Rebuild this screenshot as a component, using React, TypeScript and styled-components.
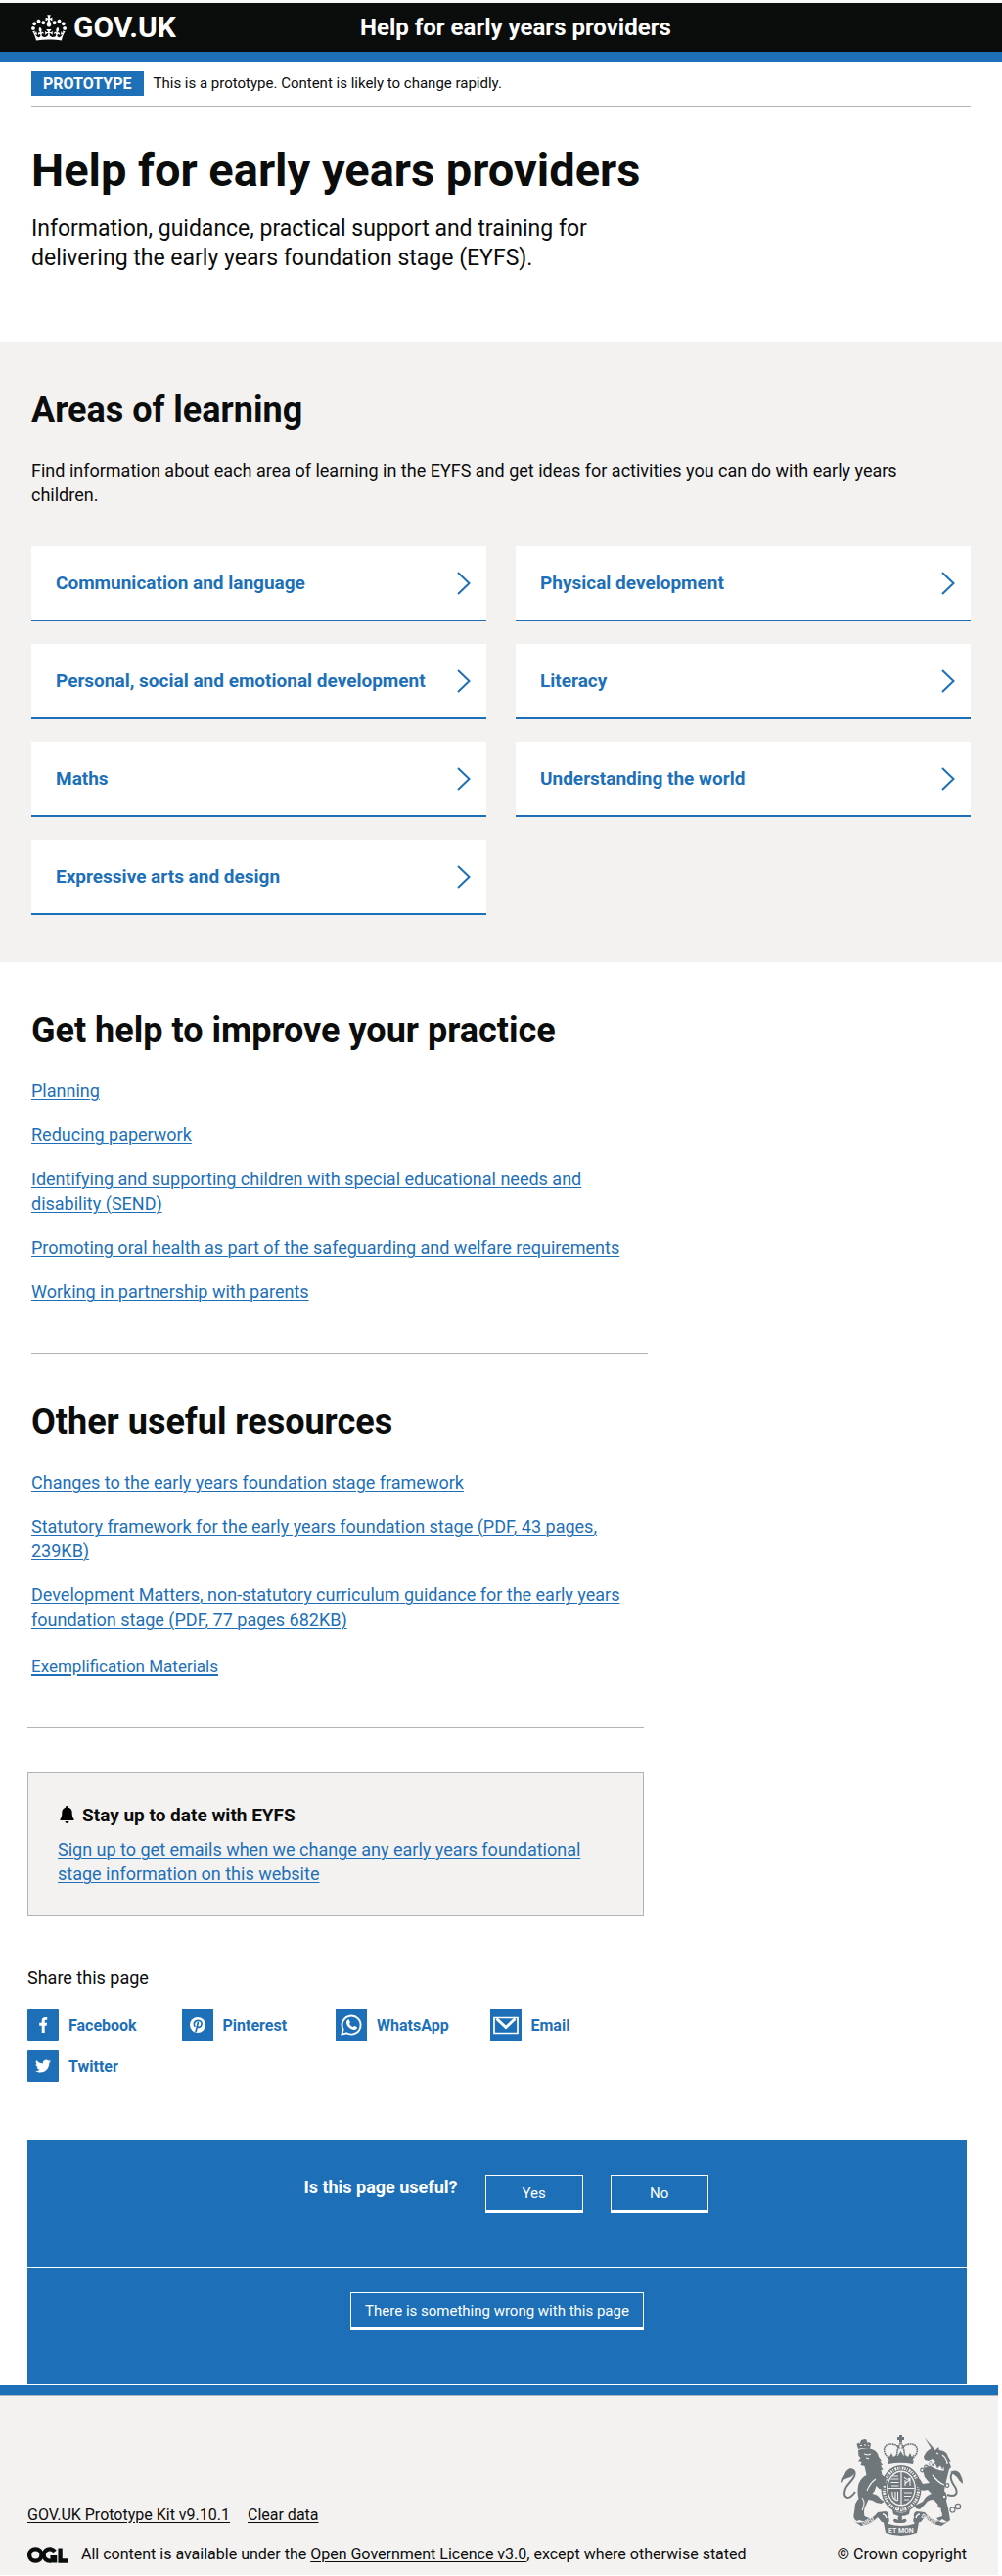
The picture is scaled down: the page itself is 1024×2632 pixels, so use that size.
import React from "react";
import styled, { createGlobalStyle, css } from "styled-components";

const color = {
  text: "#0b0c0c",
  blue: "#1d70b8",
  grey: "#f3f2f1",
  border: "#b1b4b6",
  crest: "#6f777b",
  white: "#ffffff",
};

const GlobalStyle = createGlobalStyle`
  *, *::before, *::after { box-sizing: border-box; }
  body {
    margin: 0;
    background: ${color.white};
    color: ${color.text};
    font-family: Roboto, "Liberation Sans", sans-serif;
    font-size: 18px;
    line-height: 25px;
  }
  h1, h2, h3, p, ul { margin: 0; padding: 0; }
  ul { list-style: none; }
  svg { display: block; flex: none; }
`;

/* ---------- header ---------- */

const Header = styled.header`
  padding: 0 32px;
  background: ${color.text};
  border-top: 3px solid #f8f8f8;
  border-bottom: 10px solid ${color.blue};
`;

const HeaderInner = styled.div`
  display: flex;
  align-items: center;
  height: 50px;
`;

const headerLink = css`
  color: ${color.white};
  font-weight: 700;
  text-decoration: none;
`;

const LogoLink = styled.a`
  ${headerLink}
  display: flex;
  align-items: center;
  gap: 7px;
  flex: 0 0 35%;
  font-size: 30px;
  line-height: 30px;
`;

const ServiceLink = styled.a`
  ${headerLink}
  font-size: 24px;
  line-height: 30px;
`;

/* ---------- main column ---------- */

const Wrap = styled.div`
  padding: 0 32px;
`;

const PhaseBanner = styled.div`
  display: flex;
  align-items: center;
  gap: 10px;
  padding: 10px 0;
  border-bottom: 1px solid ${color.border};
  font-size: 15px;
`;

const Tag = styled.strong`
  padding: 0 12px;
  background: ${color.blue};
  color: ${color.white};
  font-size: 16px;
  text-transform: uppercase;
`;

const TwoThirds = styled.div`
  width: 100%;
  max-width: 630px;
`;

const Intro = styled(TwoThirds)`
  padding: 40px 0 70px;
`;

const PageTitle = styled.h1`
  margin-bottom: 20px;
  font-size: 47px;
  line-height: 50px;
`;

const Lead = styled.p`
  font-size: 23px;
  line-height: 30px;
`;

const Heading = styled.h2`
  margin-bottom: 29px;
  font-size: 36px;
  line-height: 40px;
`;

const AreasSection = styled.section`
  padding: 50px 32px 48px;
  background: ${color.grey};
`;

const AreasIntro = styled.p`
  padding-right: 30px;
`;

const CardGrid = styled.ul`
  display: grid;
  grid-template-columns: 1fr 1fr;
  gap: 23px 30px;
  margin-top: 40px;
`;

const Card = styled.a`
  display: flex;
  align-items: center;
  justify-content: space-between;
  height: 77px;
  padding: 0 16px 0 25px;
  background: ${color.white};
  border-bottom: 2px solid ${color.blue};
  color: ${color.blue};
  font-size: 19px;
  font-weight: 700;
  text-decoration: none;
`;

const LinkSection = styled.section`
  padding: 50px 0;
`;

const LinkList = styled.ul`
  display: flex;
  flex-direction: column;
  gap: 20px;
`;

const LinkItem = styled.li<{ $minor?: boolean }>`
  padding-top: ${(p) => (p.$minor ? "3px" : "0")};
  font-size: ${(p) => (p.$minor ? "17px" : "18px")};
`;

const TextLink = styled.a<{ $heavy?: boolean }>`
  color: ${color.blue};
  text-decoration: underline;
  text-decoration-thickness: ${(p) => (p.$heavy ? "2px" : "1px")};
  text-underline-offset: 2px;
`;

const Rule = styled.hr`
  height: 1px;
  margin: 0;
  border: 0;
  background: ${color.border};
`;

/* ---------- lower part of the page ---------- */

const Lower = styled.div`
  margin-right: 4px;
`;

const LowerWrap = styled.div`
  padding: 0 32px 0 28px;
`;

const SignUp = styled.section`
  margin: 45px 0 50px;
  padding: 30px;
  background: ${color.grey};
  border: 1px solid ${color.border};
`;

const SignUpTitle = styled.h3`
  display: flex;
  align-items: center;
  gap: 6px;
  margin-bottom: 10px;
  font-size: 19px;
  line-height: 25px;
`;

const ShareGrid = styled.ul`
  display: grid;
  grid-template-columns: repeat(4, 1fr);
  row-gap: 10px;
  margin: 20px 0 60px;
`;

const ShareLink = styled.a`
  display: flex;
  align-items: center;
  gap: 10px;
  height: 32px;
  color: ${color.blue};
  font-size: 16px;
  font-weight: 700;
  text-decoration: none;
`;

const Feedback = styled.section`
  background: ${color.blue};
  border-bottom: 1px solid ${color.white};
`;

const FeedbackRow = styled.div<{ $question?: boolean }>`
  display: flex;
  align-items: flex-start;
  justify-content: center;
  gap: 28px;
  padding: ${(p) => (p.$question ? "35px 0 55px 18px" : "25px 0 55px")};
  border-top: ${(p) => (p.$question ? "0" : `1px solid ${color.white}`)};
`;

const Question = styled.h3`
  color: ${color.white};
  font-size: 18px;
  line-height: 25px;
`;

const OutlineButton = styled.button`
  min-width: 100px;
  height: 39px;
  padding: 0 14px;
  background: transparent;
  border: 1px solid ${color.white};
  border-bottom-width: 3px;
  border-radius: 0;
  color: ${color.white};
  font-family: inherit;
  font-size: 15px;
  line-height: 20px;
`;

/* ---------- footer ---------- */

const Footer = styled.footer`
  padding: 41px 32px 11px 28px;
  background: ${color.grey};
  border-top: 10px solid ${color.blue};
  box-shadow: inset 0 1px 0 ${color.border};
  font-size: 16px;
  line-height: 20px;
`;

const FooterInner = styled.div`
  display: flex;
  align-items: flex-end;
  justify-content: space-between;
`;

const FooterLinks = styled.ul`
  display: flex;
  gap: 18px;
  margin-bottom: 20px;
`;

const FooterLink = styled.a`
  color: ${color.text};
  text-underline-offset: 2px;
`;

const Licence = styled.p`
  display: flex;
  align-items: center;
  gap: 14px;
`;

const Copyright = styled.a`
  display: flex;
  flex-direction: column;
  align-items: center;
  gap: 9px;
  color: ${color.text};
  text-decoration: none;
`;

/* ---------- drawings ---------- */

const Crown = () => (
  <svg width="36" height="27" viewBox="0 0 132 97" fill="currentColor" aria-hidden="true">
    <path
      fillRule="evenodd"
      d="M25 30.2c3.5 1.5 7.7-.2 9.1-3.7 1.5-3.6-.2-7.8-3.9-9.2-3.6-1.4-7.6.3-9.1 3.9-1.4 3.5.3 7.5 3.9 9zM9 39.5c3.6 1.5 7.8-.2 9.2-3.7 1.5-3.6-.2-7.8-3.9-9.1-3.6-1.5-7.6.2-9.1 3.8-1.4 3.5.3 7.5 3.8 9zM4.4 57.2c3.5 1.5 7.7-.2 9.1-3.8 1.5-3.6-.2-7.7-3.9-9.1-3.5-1.5-7.6.3-9.1 3.8-1.4 3.5.3 7.6 3.9 9.1zm38.3-21.4c3.5 1.5 7.7-.2 9.1-3.8 1.5-3.6-.2-7.7-3.9-9.1-3.6-1.5-7.6.3-9.1 3.8-1.3 3.6.4 7.7 3.9 9.1zm64.4-5.6c-3.6 1.5-7.8-.2-9.1-3.7-1.5-3.6.2-7.8 3.8-9.2 3.6-1.4 7.7.3 9.2 3.9 1.3 3.5-.4 7.5-3.9 9zm15.9 9.3c-3.6 1.5-7.7-.2-9.1-3.7-1.5-3.6.2-7.8 3.7-9.1 3.6-1.5 7.7.2 9.2 3.8 1.5 3.5-.3 7.5-3.8 9zm4.7 17.7c-3.6 1.5-7.8-.2-9.2-3.8-1.5-3.6.2-7.7 3.9-9.1 3.6-1.5 7.7.3 9.2 3.8 1.3 3.5-.4 7.6-3.9 9.1zM89.3 35.8c-3.6 1.5-7.8-.2-9.2-3.8-1.4-3.6.2-7.7 3.9-9.1 3.6-1.5 7.7.3 9.2 3.8 1.4 3.6-.3 7.7-3.9 9.1zM69.7 17.7l8.9 4.7V9.3l-8.9 2.8c-.2-.3-.5-.6-.9-.9L72.4 0H59.6l3.5 11.2c-.3.3-.6.5-.9.9l-8.8-2.8v13.1l8.8-4.7c.3.3.6.7.9.9l-5 15.4v.1c-.2.8-.4 1.6-.4 2.4 0 4.1 3.1 7.5 7 8.1h.2c.3 0 .7.1 1 .1.4 0 .7 0 1-.1h.2c4-.6 7.1-4.1 7.1-8.1 0-.8-.1-1.7-.4-2.4V34l-5.1-15.4c.4-.2.7-.6 1-.9zM66 92.8c16.9 0 32.8 1.1 47.1 3.2 4-16.9 8.9-26.7 14-33.5l-9.6-3.4c1 4.9 1.1 7.2 0 10.2-1.5-1.4-3-4.3-4.2-8.7L108.6 76c2.8-2 5-3.2 7.5-3.3-4.4 9.4-10 11.9-13.6 11.2-4.3-.8-6.3-4.6-5.6-7.9 1-4.7 5.7-5.9 8-.5 4.3-8.7-3-11.4-7.6-8.8 7.1-7.2 7.9-13.5 2.1-21.1-8 6.1-8.1 12.3-4.5 20.8-4.7-5.4-12.1-2.5-9.5 6.2 3.4-5.2 7.9-2 7.2 3.1-.6 4.3-6.4 7.8-13.5 7.2-10.3-.9-10.9-8-11.2-13.8 2.5-.5 7.1 1.8 11 7.3L80.2 60c-4.1 4.4-8 5.3-12.3 5.4 1.4-4.4 8-11.6 8-11.6H55.5s6.4 7.2 7.9 11.6c-4.2-.1-8-1-12.3-5.4l1.4 16.4c3.9-5.5 8.5-7.7 10.9-7.3-.3 5.8-.9 12.8-11.1 13.8-7.2.6-12.9-2.9-13.5-7.2-.7-5 3.8-8.3 7.1-3.1 2.7-8.7-4.6-11.6-9.4-6.2 3.7-8.5 3.6-14.7-4.6-20.8-5.8 7.6-5 13.9 2.2 21.1-4.7-2.6-11.9.1-7.7 8.8 2.3-5.5 7.1-4.2 8.1.5.7 3.3-1.3 7.1-5.7 7.9-3.5.7-9-1.8-13.5-11.2 2.5.1 4.7 1.3 7.5 3.3l-4.7-15.4c-1.2 4.4-2.7 7.2-4.3 8.7-1.1-3-.9-5.3 0-10.2l-9.5 3.4c5 6.9 9.9 16.7 14 33.5 14.8-2.1 30.8-3.2 47.7-3.2z"
    />
  </svg>
);

const Chevron = () => (
  <svg width="14" height="24" viewBox="0 0 14 24" fill="none" stroke="currentColor" strokeWidth="2" aria-hidden="true">
    <path d="M1 1l11.5 11L1 23" />
  </svg>
);

const Bell = () => (
  <svg width="19" height="19" viewBox="0 0 19 19" aria-hidden="true">
    <path d="M9.5 0c.9 0 1.5.6 1.5 1.4v.4c2.3.7 3.7 2.5 3.7 5.2 0 3.5.5 5.2 1.8 6.4V15h-14v-1.6C3.800 12.200 4.300 10.500 4.300 7c0-2.700 1.400-4.500 3.700-5.200v-.4C8 .6 8.600 0 9.500 0z" />
    <path d="M7.500 16h4c0 1.200-.9 2-2 2s-2-.8-2-2z" />
  </svg>
);

const Tile = ({ rounded, children }: { rounded?: boolean; children: React.ReactNode }) => (
  <svg width="32" height="32" viewBox="0 0 32 32" aria-hidden="true">
    <rect width="32" height="32" rx={rounded ? 1 : 0} fill={color.blue} />
    {children}
  </svg>
);

const FacebookIcon = () => (
  <Tile rounded>
    <path
      fill="#fff"
      d="M17.700 24v-7.300h2l.4-2.900h-2.400V12c0-.9.300-1.300 1.300-1.300h1.200V8.100C19.900 8 19.200 8 18.500 8c-2.300 0-3.800 1.300-3.800 3.600v2.200h-2.500v2.900h2.500V24z"
    />
  </Tile>
);

const PinterestIcon = () => (
  <Tile>
    <circle cx="16" cy="16" r="8" fill="#fff" />
    <path
      fill="none"
      stroke={color.blue}
      strokeWidth="1.7"
      strokeLinecap="round"
      d="M12.900 17.300c-1.700-2.800.2-6 3.400-6 2.700 0 4.200 1.900 3.700 4.400-.5 2.600-3.500 3.600-4.600 1.500M16.300 13.700l-2.200 9"
    />
  </Tile>
);

const WhatsAppIcon = () => (
  <Tile>
    <path
      fill="none"
      stroke="#fff"
      strokeWidth="1.9"
      strokeLinejoin="round"
      d="M6.300 25.700l1.400-5.100a9.500 9.500 0 1 1 3.600 3.700z"
    />
    <path
      fill="#fff"
      d="M12.400 10.600c.5-.4 1.200-.3 1.500.3l.9 2c.2.500 0 .8-.8 1.800.8 1.600 2 2.700 3.800 3.500.8-1 1.100-1.400 1.700-1.200l2.100 1c.5.300.5.700.3 1.300-.5 1.400-2.400 2.100-3.800 1.700-3.700-1-6.300-3.500-7-6.500-.3-1.500.3-3 1.300-3.900z"
    />
  </Tile>
);

const EmailIcon = () => (
  <Tile>
    <path fill="none" stroke="#fff" strokeWidth="1.7" d="M4 8.500h24v16H4z" />
    <path fill="none" stroke="#fff" strokeWidth="3" d="M6.500 9.500l9.500 9 9.500-9" />
  </Tile>
);

const TwitterIcon = () => (
  <Tile rounded>
    <path
      fill="#fff"
      d="M24 11c-.6.300-1.200.4-1.900.5.700-.4 1.200-1 1.400-1.800-.6.400-1.300.6-2.100.8A3.300 3.300 0 0 0 15.800 13.500c-2.700-.1-5.100-1.400-6.700-3.400-.9 1.500-.4 3.400 1 4.400-.5 0-1-.2-1.500-.4 0 1.600 1.100 2.900 2.600 3.200-.5.100-1 .1-1.500.1.400 1.300 1.600 2.200 3.100 2.300A6.600 6.600 0 0 1 8 21c1.500.9 3.200 1.500 5 1.500 6.100 0 9.500-5.100 9.300-9.800.7-.4 1.200-1 1.700-1.700z"
    />
  </Tile>
);

const OglLogo = () => (
  <svg width="41" height="17" viewBox="0 0 41 17" fill="none" stroke="currentColor" strokeWidth="4.3" role="img" aria-label="OGL">
    <circle cx="8.3" cy="8.5" r="6.2" />
    <path d="M28 5A6.200 6.200 0 1 0 28 12M23.500 11.200h4.600v5.300M33.600 1.500v13H41" />
  </svg>
);

const Crest = () => (
  <svg width="126" height="103" viewBox="0 0 126 103" fill={color.crest} aria-hidden="true">
    {/* royal crown */}
    <path d="M60 0h3v2h2v3h-2v2.500h-3V5h-2V2h2z" />
    <path
      d="M61.500 8c-3 3-4 9-4 15M61.500 8c3 3 4 9 4 15M49 23c-7-6-5-14 2-14 5 0 8 2 9.500 5M74 23c7-6 5-14-2-14-5 0-8 2-9.500 5"
      fill="none"
      stroke={color.crest}
      strokeWidth="1.6"
      strokeDasharray="1.8 .5"
    />
    <path d="M48 19l2 3 2-4 2 4 3-2 1.500 1 3-5 3 5L66 20l3 2 2-4 2 4 2-3-1 6H49z" />
    <path d="M48 25.500q13.500-3 27 0L74 30q-12.500-2.500-25 0z" />
    {/* garter and shield */}
    <ellipse cx="62" cy="55" rx="20.5" ry="24" />
    <ellipse cx="62" cy="54.5" rx="14.8" ry="18" fill={color.grey} />
    <ellipse cx="62" cy="54.5" rx="13.5" ry="16.5" />
    <path d="M62 38v33M48.500 54.500h27" stroke={color.grey} strokeWidth="1.2" />
    <path
      d="M51.500 45h8M51.500 48.500h8M52 52h7.500M53 42h6M65 59h8M65 62.500h7M65 66h5M65 43q3 4 6 1M65.500 50l6-5M66 46v6M71 44v8M53 58q-1 7 5 9M56 58v8M58.500 58v9"
      fill="none"
      stroke={color.grey}
      strokeWidth="1.1"
    />
    <ellipse
      cx="62"
      cy="55"
      rx="17.7"
      ry="21"
      fill="none"
      stroke={color.grey}
      strokeWidth="3"
      strokeDasharray="1.3 1.1 .8 1.5 1.8 .9"
      strokeDashoffset="2"
    />
    <path d="M53 76q9 7 18 0l-1 5q-8 4-16 0z" />
    <circle cx="57.5" cy="76.5" r="1" fill={color.grey} />
    <circle cx="62" cy="77.5" r="1" fill={color.grey} />
    <circle cx="66.5" cy="76.5" r="1" fill={color.grey} />
    {/* lion */}
    <path d="M18 14l-1.500-5 2-1.500 1 1.500 1.500-4 2-.5L24.500 4l2 .5 1 3.500 1.500-1 2 1.500L30 14q-6-2-12 0z" />
    <path d="M20 10.500h2M24 10h2M28 10.500h1" stroke={color.grey} strokeWidth="1.2" />
    <path d="M18 15q7-3 14-1 6 2 7 8l3 4-1.500 1 2.500 4-2 .5 2.500 4-2 .5 1 5 5 3-2 4 2 3-4 1 1 4-5-1-3-3q-1 5-4 8 6 1 8 5l4 3-3 2-5-1q-4-3-8-3l-4 9q-1 4 0 8l5 2 1 3-6 1-5-2-3 1q-4-3-3-6l1-7q0-6 4-10-2-7 0-15 3-7 8-9l-2-9-4-1 1-3-4-1 3-4-2-2z" />
    <path d="M24 19l4 1 3-1M26 23l3 1M36 45q-6 4-9 12M22 64q4 5 0 13" fill="none" stroke={color.grey} strokeWidth="1.1" />
    <path d="M15 58C8 68 2 64 5 55c2-6 12-11 9-18-2-3-5-1-6 1" fill="none" stroke={color.crest} strokeWidth="2" />
    <path d="M0 49q0-6 4-8 1-5 6-7l5 3q-2 6-8 7-4 1-7 5z" />
    {/* unicorn */}
    <path d="M86 2.500l12 14-2.500 2z" />
    <path d="M96 16l4-4 1 3q8 1 9 7l3 5-2 1 2 5-2 2-1 4-3 12-1 6q4 4 2 10l2 8 2 12-3 2-5-3-3 2-3-3 6-2-1-8q-4-5-8-9-6 0-8 4l-6 6-4-1-1-3 8-4q3-6 9-8l-4-4q-7 2-9-2l-4-5 1-5 4 1 3 5 7-1-5-6-2-7 3-3q7-1 10-6l-3-3-4 2-4-1-1-3q2-6 8-9z" />
    <path d="M91 31q6 4 13 3M98 18l2 1M94 41q6 8 12 10M104 20q5 4 5 10" fill="none" stroke={color.grey} strokeWidth="1.3" />
    <path d="M90 30l2-3 2 5 3-3 2 5 3-3 2 4 2-3v5q-9 0-16-7z" fill={color.grey} stroke={color.crest} strokeWidth=".6" />
    <path d="M109 61c8 3 12-1 8-8-3-4-6-10-3-14 3-3 7-1 8 3" fill="none" stroke={color.crest} strokeWidth="2" />
    <path d="M112 38q5-3 9 1 4 4 4 11-4-3-6-7-3-3-7-5z" />
    <g fill="none" stroke={color.crest} strokeWidth="1.2">
      <circle cx="102" cy="72" r="2" />
      <circle cx="105.5" cy="76.5" r="2.3" />
      <circle cx="114.5" cy="76.5" r="2.5" />
      <circle cx="120" cy="73" r="2.7" />
      <circle cx="109" cy="51.5" r="1.8" fill={color.grey} />
      <circle cx="106" cy="63" r="1.8" fill={color.grey} />
      <circle cx="87.5" cy="33" r="1.8" />
      <circle cx="83.5" cy="36" r="1.8" />
    </g>
    {/* motto scroll */}
    <path d="M12 87q6 5 12 1 9-2 14-9l8-1q4 1 3 6 2 5-1 6l-6-1-4-5q-6 7-17 9z" />
    <path d="M112 87q-6 5-12 1-9-2-14-9l-8-1q-4 1-3 6-2 5 1 6l6-1 4-5q6 7 17 9z" />
    <path d="M43 84l6 7q13 4 26 0l6-7-3 16q-16 6-32 0z" />
    <path d="M43 81q3 0 4 4M81 81q-3 0-4 4" fill="none" stroke={color.grey} strokeWidth="1.5" />
    <path d="M61 81q3 3 1.500 6 5-3 5 1-1 2-4 2H58q-3 0-4-2 0-4 5-1-1.500-3 2-6z" />
    <g fill={color.grey} fontFamily="Roboto, sans-serif" fontSize="7" fontWeight="700">
      <text x="49" y="100">ET MON</text>
      <text x="23" y="93" transform="rotate(-27 23 93)" fontSize="6">DIEU</text>
      <text x="82" y="84" transform="rotate(28 82 84)" fontSize="6">DROIT</text>
    </g>
  </svg>
);

/* ---------- data ---------- */

const areas = [
  "Communication and language",
  "Physical development",
  "Personal, social and emotional development",
  "Literacy",
  "Maths",
  "Understanding the world",
  "Expressive arts and design",
];

type LinkEntry = { label: string; minor?: boolean };

const practiceLinks: LinkEntry[] = [
  { label: "Planning" },
  { label: "Reducing paperwork" },
  { label: "Identifying and supporting children with special educational needs and disability (SEND)" },
  { label: "Promoting oral health as part of the safeguarding and welfare requirements" },
  { label: "Working in partnership with parents" },
];

const resourceLinks: LinkEntry[] = [
  { label: "Changes to the early years foundation stage framework" },
  { label: "Statutory framework for the early years foundation stage (PDF, 43 pages, 239KB)" },
  {
    label:
      "Development Matters, non-statutory curriculum guidance for the early years foundation stage (PDF, 77 pages 682KB)",
  },
  { label: "Exemplification Materials", minor: true },
];

const shares = [
  { name: "Facebook", Icon: FacebookIcon },
  { name: "Pinterest", Icon: PinterestIcon },
  { name: "WhatsApp", Icon: WhatsAppIcon },
  { name: "Email", Icon: EmailIcon },
  { name: "Twitter", Icon: TwitterIcon },
];

const Links = ({ title, items }: { title: string; items: LinkEntry[] }) => (
  <LinkSection>
    <Heading>{title}</Heading>
    <LinkList>
      {items.map(({ label, minor }) => (
        <LinkItem key={label} $minor={minor}>
          <TextLink href="#" $heavy={minor}>
            {label}
          </TextLink>
        </LinkItem>
      ))}
    </LinkList>
  </LinkSection>
);

export default function App() {
  return (
    <>
      <GlobalStyle />
      <Header>
        <HeaderInner>
          <LogoLink href="#">
            <Crown />
            GOV.UK
          </LogoLink>
          <ServiceLink href="#">Help for early years providers</ServiceLink>
        </HeaderInner>
      </Header>

      <main>
        <Wrap>
          <PhaseBanner>
            <Tag>Prototype</Tag>
            <span>This is a prototype. Content is likely to change rapidly.</span>
          </PhaseBanner>
          <Intro>
            <PageTitle>Help for early years providers</PageTitle>
            <Lead>
              Information, guidance, practical support and training for delivering the early years foundation stage
              (EYFS).
            </Lead>
          </Intro>
        </Wrap>

        <AreasSection>
          <Heading>Areas of learning</Heading>
          <AreasIntro>
            Find information about each area of learning in the EYFS and get ideas for activities you can do with early
            years children.
          </AreasIntro>
          <CardGrid>
            {areas.map((area) => (
              <li key={area}>
                <Card href="#">
                  {area}
                  <Chevron />
                </Card>
              </li>
            ))}
          </CardGrid>
        </AreasSection>

        <Wrap>
          <TwoThirds>
            <Links title="Get help to improve your practice" items={practiceLinks} />
            <Rule />
            <Links title="Other useful resources" items={resourceLinks} />
          </TwoThirds>
        </Wrap>

        <Lower>
          <LowerWrap>
            <TwoThirds>
              <Rule />
              <SignUp>
                <SignUpTitle>
                  <Bell />
                  Stay up to date with EYFS
                </SignUpTitle>
                <TextLink href="#">
                  Sign up to get emails when we change any early years foundational stage information on this website
                </TextLink>
              </SignUp>
              <p>Share this page</p>
              <ShareGrid>
                {shares.map(({ name, Icon }) => (
                  <li key={name}>
                    <ShareLink href="#">
                      <Icon />
                      {name}
                    </ShareLink>
                  </li>
                ))}
              </ShareGrid>
            </TwoThirds>
            <Feedback>
              <FeedbackRow $question>
                <Question>Is this page useful?</Question>
                <OutlineButton type="button">Yes</OutlineButton>
                <OutlineButton type="button">No</OutlineButton>
              </FeedbackRow>
              <FeedbackRow>
                <OutlineButton type="button">There is something wrong with this page</OutlineButton>
              </FeedbackRow>
            </Feedback>
          </LowerWrap>
        </Lower>
      </main>

      <Lower>
        <Footer>
          <FooterInner>
            <div>
              <FooterLinks>
                <li>
                  <FooterLink href="#">GOV.UK Prototype Kit v9.10.1</FooterLink>
                </li>
                <li>
                  <FooterLink href="#">Clear data</FooterLink>
                </li>
              </FooterLinks>
              <Licence>
                <OglLogo />
                <span>
                  All content is available under the <FooterLink href="#">Open Government Licence v3.0</FooterLink>,
                  except where otherwise stated
                </span>
              </Licence>
            </div>
            <Copyright href="#">
              <Crest />© Crown copyright
            </Copyright>
          </FooterInner>
        </Footer>
      </Lower>
    </>
  );
}
